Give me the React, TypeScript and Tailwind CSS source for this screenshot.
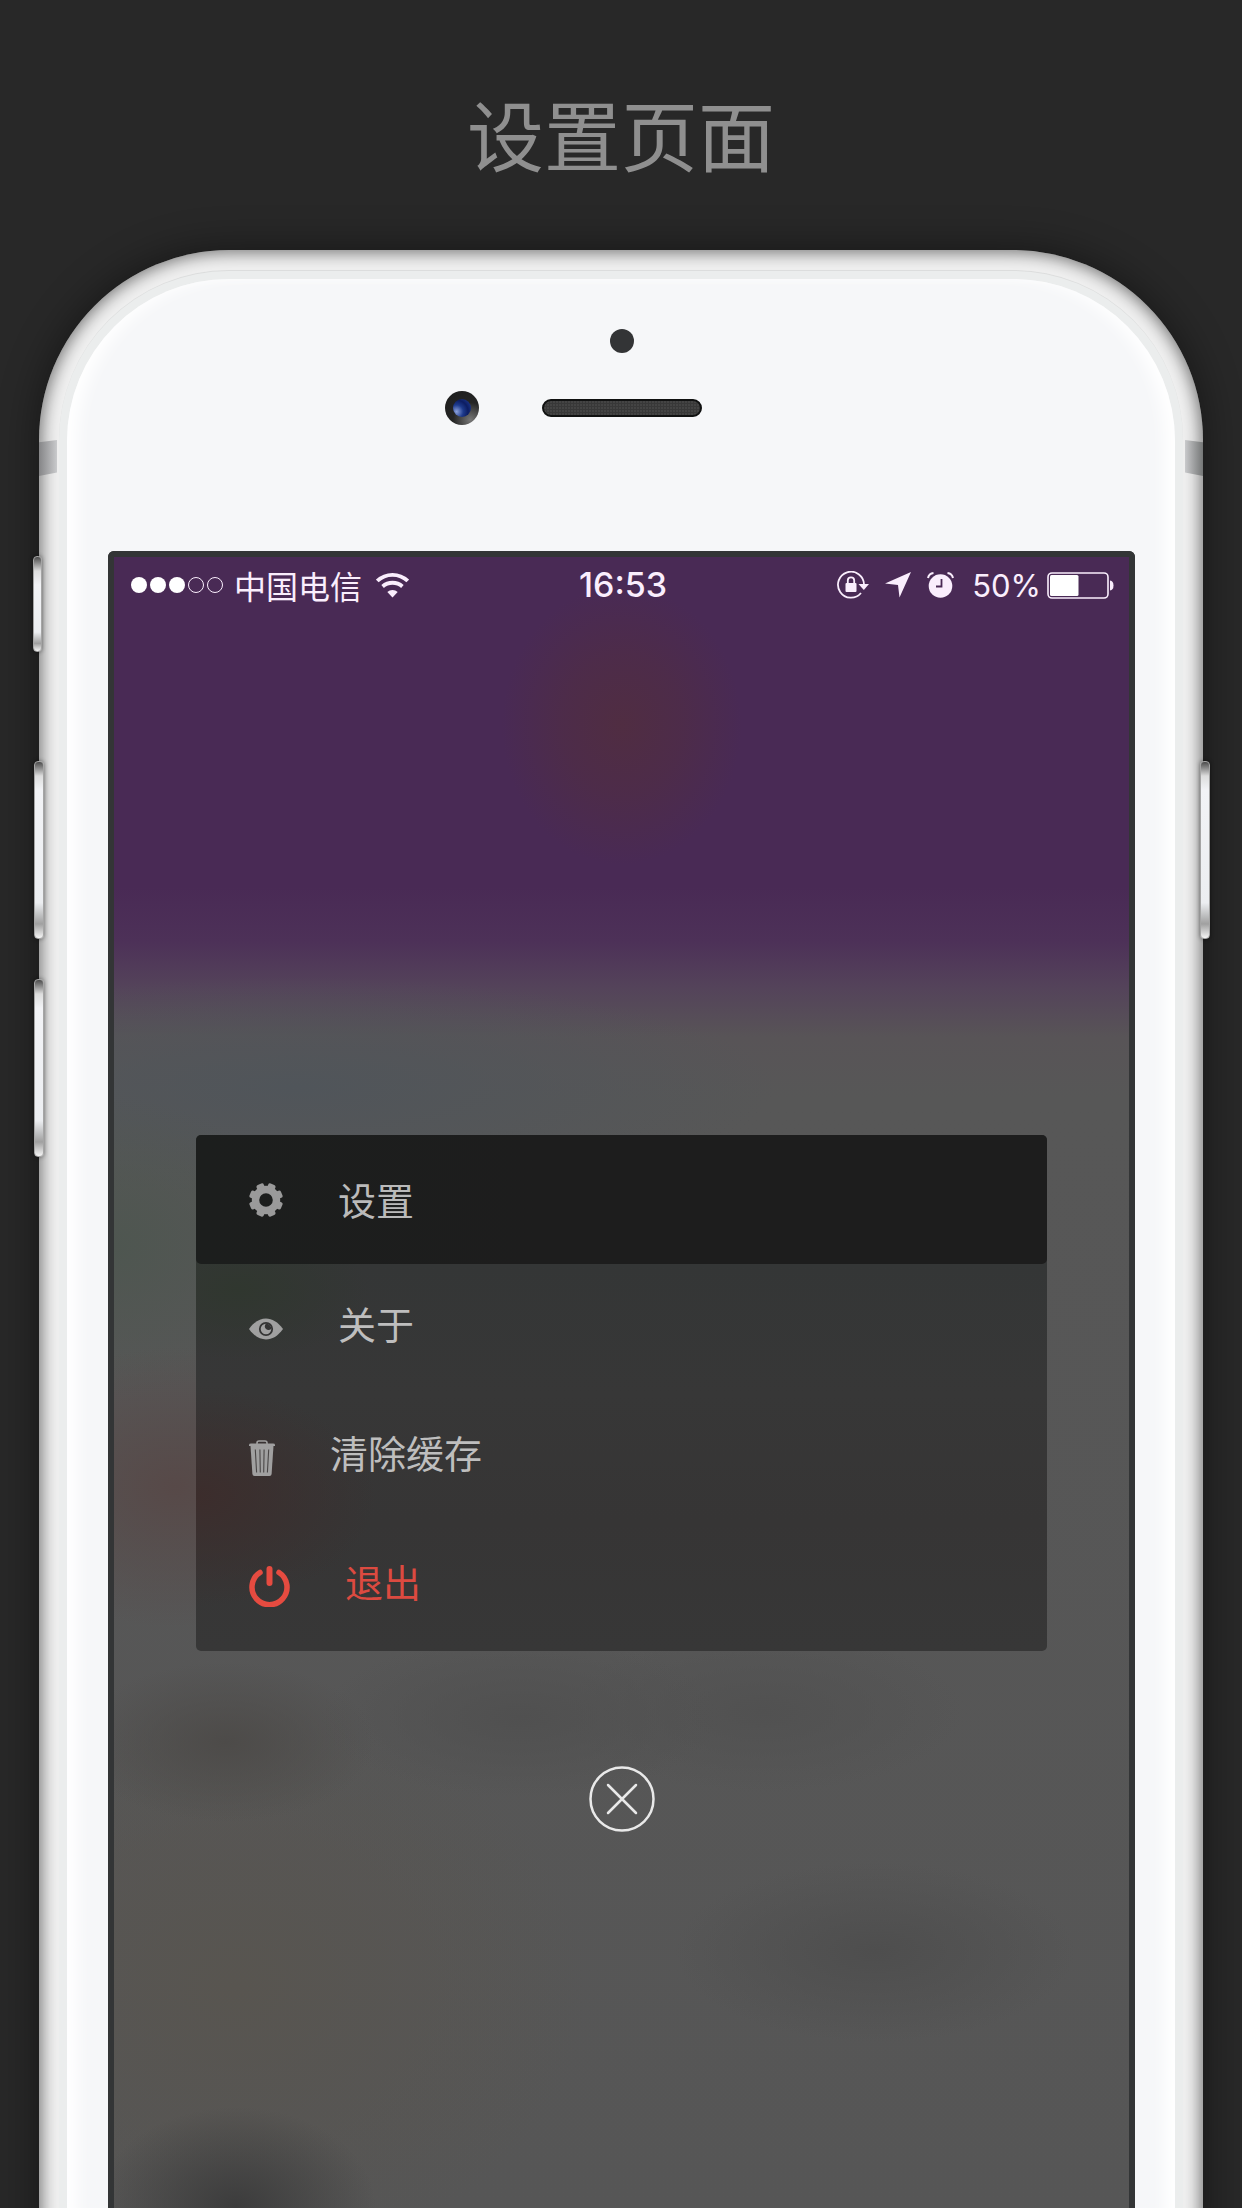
import React from 'react';

const cjk = "font-['Noto_Sans_CJK_SC',sans-serif]";

function GearIcon() {
  const angles = [22.5, 67.5, 112.5, 157.5, 202.5, 247.5, 292.5, 337.5];
  return (
    <svg width="34" height="34" viewBox="-17 -17 34 34" aria-hidden="true">
      <circle r="10.5" fill="none" stroke="currentColor" strokeWidth="7.4" />
      {angles.map((a) => (
        <rect key={a} x="-3.9" y="-17" width="7.8" height="8" rx="2" fill="currentColor" transform={`rotate(${a})`} />
      ))}
    </svg>
  );
}

function EyeIcon() {
  return (
    <svg width="34" height="22" viewBox="0 0 34 22" aria-hidden="true">
      <path d="M0 11C5 4 11 .5 17 .5S29 4 34 11C29 18 23 21.5 17 21.5S5 18 0 11Z" fill="currentColor" />
      <circle cx="17" cy="11" r="6.2" fill="none" stroke="#343434" strokeWidth="1.8" />
      <path d="M17 11Q14.500 8.500 17 5.500A5.500 5.500 0 0 1 22.300 11Q19.500 13 17 11Z" fill="#343434" />
    </svg>
  );
}

function TrashIcon() {
  return (
    <svg width="26" height="36" viewBox="0 0 26 36" aria-hidden="true">
      <path d="M8 4V3Q8 1 10 1H16Q18 1 18 3V4" fill="none" stroke="currentColor" strokeWidth="1.600" />
      <path d="M0 5Q0 3.600 2 3.600H24Q26 3.600 26 5V6H0Z" fill="currentColor" />
      <path d="M1.500 6H24.500L22.600 34Q22.400 36 20.500 36H5.500Q3.600 36 3.400 34Z" fill="currentColor" />
      <path d="M6.300 9.500L7.600 32.500M10.900 9.500L11.300 32.500M15.100 9.500L14.700 32.500M19.700 9.500L18.400 32.500" stroke="#4a4747" strokeWidth="1.100" />
    </svg>
  );
}

function PowerIcon() {
  return (
    <svg width="41" height="41" viewBox="0 0 41 41" fill="none" stroke="currentColor" strokeLinecap="round" aria-hidden="true">
      <path d="M11 6.500A17.500 17.500 0 1 0 30 6.500" strokeWidth="5.500" />
      <path d="M20.500 3V17" strokeWidth="6" />
    </svg>
  );
}

function WifiIcon() {
  return (
    <svg width="33" height="25" viewBox="0 0 33 25" fill="none" stroke="currentColor" aria-hidden="true">
      <path d="M1.300 8A22 22 0 0 1 31.700 8" strokeWidth="3.800" />
      <path d="M6.600 13.500A15 15 0 0 1 26.400 13.500" strokeWidth="3.800" />
      <path d="M16.500 24.500L11.300 19A7.500 7.500 0 0 1 21.700 19Z" fill="currentColor" stroke="none" />
    </svg>
  );
}

function RotationLockIcon() {
  return (
    <svg width="32" height="28" viewBox="0 0 32 28" fill="none" stroke="currentColor" aria-hidden="true">
      <path d="M27 13.500A13 13 0 1 0 24 22" strokeWidth="1.800" />
      <path d="M21.500 13H32L26.800 19Z" fill="currentColor" stroke="none" />
      <rect x="8.500" y="12" width="11" height="9" rx="1" fill="currentColor" stroke="none" />
      <path d="M10.800 12.500V9.500A3.200 3.200 0 0 1 17.200 9.500V12.500" strokeWidth="1.800" />
    </svg>
  );
}

function LocationIcon() {
  return (
    <svg width="26" height="26" viewBox="0 0 26 26" fill="currentColor" aria-hidden="true">
      <path d="M26 0L14.500 25.500L13 13L0 11.500Z" />
    </svg>
  );
}

function AlarmIcon() {
  return (
    <svg width="27" height="26" viewBox="0 0 27 26" aria-hidden="true">
      <circle cx="13.500" cy="14" r="11.800" fill="currentColor" />
      <path d="M1 6Q2 1.500 6.500 1M26 6Q25 1.500 20.500 1" fill="none" stroke="currentColor" strokeWidth="2" />
      <path d="M14.500 7V14.500H9" fill="none" stroke="#4a2a55" strokeWidth="1.800" />
    </svg>
  );
}

function BatteryIcon() {
  return (
    <svg width="67" height="27" viewBox="0 0 67 27" aria-hidden="true">
      <rect x="1" y="1" width="60" height="25" rx="4" fill="none" stroke="currentColor" strokeWidth="1.600" />
      <rect x="3" y="3" width="28.500" height="21" rx="1.500" fill="#ffffff" />
      <path d="M63 8.500Q66.500 9 66.500 13.500T63 18.500Z" fill="currentColor" />
    </svg>
  );
}

function StatusBar() {
  return (
    <header className="flex h-14 items-center justify-between pl-[17px] pr-[15px] leading-none text-[#faeefd]">
      <div className="flex items-center">
        <div className="flex gap-[3px]" role="img" aria-label="3/5">
          <span className="size-4 rounded-full bg-white" />
          <span className="size-4 rounded-full bg-white" />
          <span className="size-4 rounded-full bg-white" />
          <span className="size-4 rounded-full border border-current" />
          <span className="size-4 rounded-full border border-current" />
        </div>
        <span className={`ml-[11px] mr-3.5 text-[32px] leading-none ${cjk}`}>中国电信</span>
        <WifiIcon />
      </div>
      <time className="font-['Inter',sans-serif] text-[34px] leading-none font-medium">16:53</time>
      <div className="flex items-center">
        <RotationLockIcon />
        <span className="ml-4"><LocationIcon /></span>
        <span className="ml-4"><AlarmIcon /></span>
        <span className="ml-[18px] mr-1.5 font-['Inter',sans-serif] text-[31px] leading-none">50%</span>
        <BatteryIcon />
      </div>
    </header>
  );
}

const items = [
  { label: '设置', icon: <GearIcon />, style: 'rounded-[5px] bg-[linear-gradient(90deg,#1c1e1d,#1d1d1d_40%)] text-[#9a9a9a]', text: 'pb-0.5 text-[#bababa]' },
  { label: '关于', icon: <EyeIcon />, style: 'text-[#a0a0a0]', text: 'pb-3 text-[#bebebe]' },
  { label: '清除缓存', icon: <TrashIcon />, style: 'text-[#a0a0a0]', text: 'pb-3 text-[#bebebe]' },
  { label: '退出', icon: <PowerIcon />, style: 'text-[#e64b40]', text: 'pb-3 text-[#dc4a40]' },
];

function Menu() {
  return (
    <nav className="mx-[82px] mt-[522px] rounded-[5px] bg-[linear-gradient(180deg,#343636_25%,#373737_50%,#363535_75%,#373737)]">
      <ul className="bg-[radial-gradient(180px_110px_at_0%_70%,#3c2d2c,transparent),radial-gradient(130px_70px_at_5%_30%,#30372f,transparent)]">
        {items.map((item) => (
          <li key={item.label}>
            <button type="button" className={`flex h-[129px] w-full items-center gap-[55px] pl-[53px] ${item.style}`}>
              {item.icon}
              <span className={`text-[38px] leading-none ${cjk} ${item.text}`}>{item.label}</span>
            </button>
          </li>
        ))}
      </ul>
    </nav>
  );
}

function SideButton({ className }: { className: string }) {
  return (
    <span
      className={`absolute rounded-[4px] border border-[#a5a5a5] bg-[linear-gradient(180deg,#4b4b4b_0,#dddddd_14px,#f2f3f6_28px,#eceef1_80%,#a0a0a0_92%,#f5f5f5)] shadow-[0_0_4px_rgba(0,0,0,0.45)] ${className}`}
    />
  );
}

export default function App() {
  return (
    <main className="flex min-h-screen flex-col overflow-hidden bg-[#282828] px-[39px]">
      <h1 className={`flex h-[250px] items-center justify-center pt-3.5 text-[77px] leading-none text-[#8f8f8f] ${cjk}`}>
        设置页面
      </h1>

      <section className="relative -mb-10 flex flex-1 flex-col rounded-t-[190px] bg-[#f0f0f0] px-5 pt-5 shadow-[0_0_40px_rgba(0,0,0,0.45),inset_0_0_16px_3px_rgba(0,0,0,0.5)]">
        <SideButton className="-left-1.5 top-[306px] h-24 w-[9px]" />
        <SideButton className="-left-[5px] top-[511px] h-[178px] w-2.5" />
        <SideButton className="-left-[5px] top-[729px] h-[178px] w-2.5" />
        <SideButton className="-right-[7px] top-[511px] h-[178px] w-2.5" />
        <span className="absolute left-0 top-[190px] h-9 w-[18px] bg-linear-to-r from-[#858587] to-[#c9cacc] [clip-path:polygon(0_6%,100%_0,100%_90%,0_100%)]" />
        <span className="absolute right-0 top-[190px] h-9 w-[18px] bg-linear-to-l from-[#757777] to-[#c9cacc] [clip-path:polygon(0_0,100%_6%,100%_100%,0_90%)]" />

        <div className="flex flex-1 flex-col rounded-t-[170px] border-t border-[#dcdddd] bg-[#ebeded] px-2 pt-2">
          <div className="flex flex-1 flex-col rounded-t-[162px] bg-[#f6f7f9] pl-[41px] pr-10 shadow-[inset_14px_0_16px_-4px_#ffffff,inset_-14px_0_16px_-4px_#ffffff]">
            <span className="mt-[50px] size-6 self-center rounded-full bg-[#333436]" />
            <div className="mt-[38px] mb-[126px] grid grid-cols-[1fr_auto_1fr] items-center">
              <span className="mr-[63px] flex size-[34px] items-center justify-center justify-self-end rounded-full bg-[radial-gradient(circle_at_75%_85%,#777777,#252525_45%,#1b1b1b)]">
                <span className="size-[18px] rounded-full bg-[radial-gradient(circle_at_20%_70%,#8da2dd,#1d3a8c_35%,#0c1d62_60%,#2444a0)]" />
              </span>
              <span className="h-[18px] w-40 rounded-full border-2 border-[#101111] bg-[#444444] bg-[repeating-linear-gradient(90deg,transparent_0_2px,#383838_2px_3px),repeating-linear-gradient(180deg,transparent_0_2px,#383838_2px_3px)]" />
            </div>

            <div className="flex flex-1 flex-col rounded-t-[6px] border-[6px] border-b-0 border-[#333536] bg-[#565656] bg-[radial-gradient(120px_140px_at_50%_168px,#502d42,#502d4299_50%,transparent),radial-gradient(140px_100px_at_12%_1650px,#3c3c3c,transparent),radial-gradient(200px_90px_at_75%_1395px,#4e4e4e,transparent),radial-gradient(150px_80px_at_11%_1185px,#4d4b49,transparent),radial-gradient(200px_80px_at_40%_1160px,#505050,transparent),radial-gradient(200px_80px_at_64%_1155px,#515151,transparent),radial-gradient(190px_140px_at_6%_930px,#574948,transparent),radial-gradient(180px_150px_at_0%_690px,#4e5650,transparent),radial-gradient(480px_110px_at_18%_530px,#50555a,transparent),radial-gradient(350px_280px_at_12%_1430px,#585550,transparent),linear-gradient(180deg,#492a55_0,#492a55_330px,#4d3158_385px,#54435a_430px,#585457_480px,#575757_540px,#565656)]">
              <StatusBar />
              <Menu />
              <button type="button" aria-label="关闭" className="mt-[115px] self-center text-[#e9e9e9]">
                <svg width="66" height="66" viewBox="0 0 66 66" fill="none" stroke="currentColor" strokeWidth="2.500" strokeLinecap="round">
                  <circle cx="33" cy="33" r="31.500" />
                  <path d="M19 19L47 47M47 19L19 47" />
                </svg>
              </button>
            </div>
          </div>
        </div>
      </section>
    </main>
  );
}
